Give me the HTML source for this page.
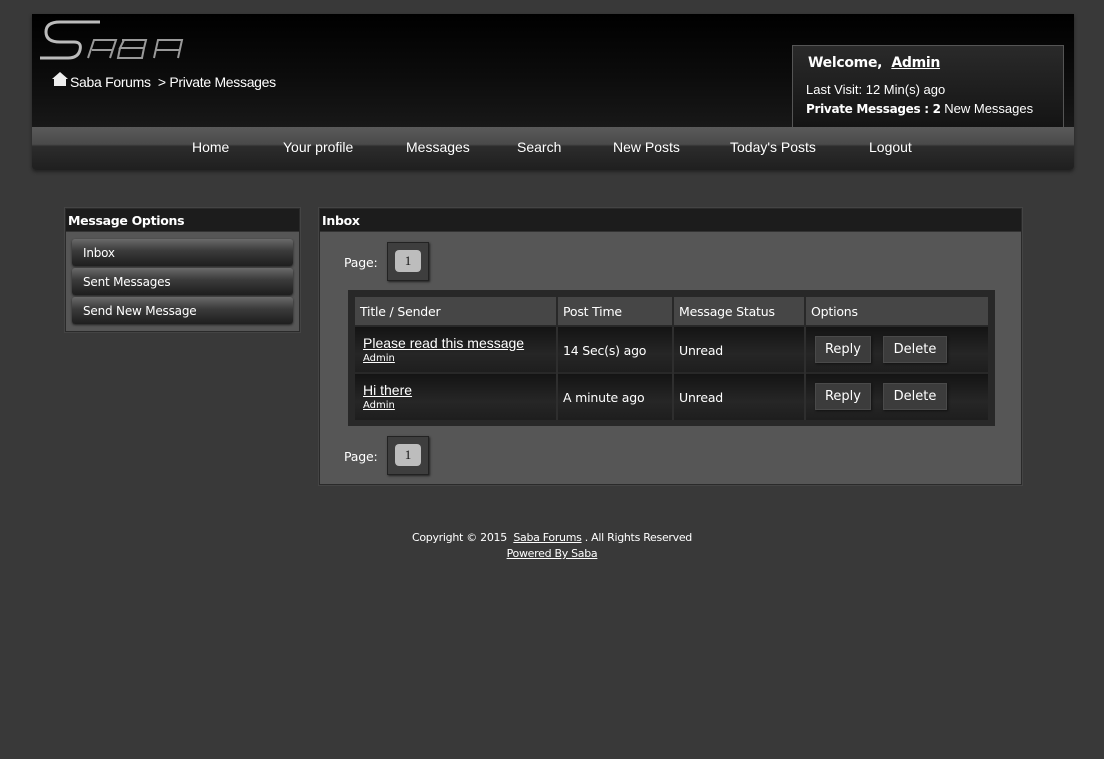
<!DOCTYPE html>
<html><head><meta charset="utf-8"><style>
*{margin:0;padding:0;box-sizing:border-box}
body{width:1104px;height:759px;background:#393939;font-family:"DejaVu Sans","Liberation Sans",sans-serif;color:#fff;position:relative;overflow:hidden}
.a{position:absolute}
.hdr{left:32px;top:14px;width:1042px;height:156px;background:linear-gradient(#000 0%,#0c0c0c 40%,#222 100%);border-radius:0 0 4px 4px;box-shadow:0 2px 3px #222}
.nav{left:32px;top:127px;width:1042px;height:43px;background:linear-gradient(#5a5a5a 0%,#4a4a4a 40%,#2c2c2c 45%,#1f1f1f 100%);border-radius:0 0 5px 5px}
.nav span{position:absolute;top:12px;font-family:"Liberation Sans",sans-serif;font-size:14px;color:#fff}
.wel{left:792px;top:45px;width:272px;height:82px;background:linear-gradient(#2a2a2a,#141414);border:1px solid #555;border-bottom:none}
.t13{font-family:"Liberation Sans",sans-serif;font-size:12.5px}
.box{background:#565656;border:1px solid #2a2a2a;box-shadow:0 0 0 1px #444}
.bh{background:#1c1c1c;font-weight:bold;font-size:12.5px;padding:4px 2px;height:23px;border-bottom:1px solid #333;letter-spacing:-0.3px}
.item{left:72px;width:221px;height:27px;background:linear-gradient(#6a6a6a,#3a3a3a 45%,#1e1e1e);border-radius:3px;font-size:12px;padding:7px 11px;box-shadow:0 1px 2px #222;letter-spacing:-0.2px}
.pg{width:42px;height:39px;background:#3e3e3e;border:1px solid #222;box-shadow:1px 1px 2px #222}
.pg div{position:absolute;left:7px;top:7px;width:26px;height:22px;background:#bdbdbd;border-radius:4px;color:#111;font-family:"Liberation Serif",serif;font-size:13px;text-align:center;line-height:22px}
.th{background:#464646;top:297px;height:28px;font-size:12.5px;padding:7px 5px;letter-spacing:-0.2px}
.td{font-size:13px;background:linear-gradient(#141414,#262626 60%,#1e1e1e)}
.c{font-size:12.5px;letter-spacing:-0.2px}
.btn{width:56px;height:27px;background:#3c3c3c;border:1px solid #4a4a4a;box-shadow:1px 1px 2px #111;font-size:13px;text-align:center;line-height:25px}
u{text-decoration:underline}
</style></head><body>
<div class="a hdr"></div>
<svg class="a" style="left:38px;top:18px" width="150" height="46" viewBox="0 0 150 46"><g fill="none" stroke="#bbb" stroke-width="3"><path d="M62 4 H22 Q8 4 8 14 Q8 24 22 24 H36 Q44 24 42 32 Q40 40 30 40 H2"/></g><g fill="none" stroke="#999" stroke-width="2"><path d="M50 40 L56 22 H78 L72 40 M54 32 H74"/><path d="M84 22 H108 L106 30 H82 L86 22 M82 30 L80 40 H104 L106 30"/><path d="M116 40 L120 22 H144 L140 40 M118 32 H142"/></g></svg>
<svg class="a" style="left:52px;top:72px" width="16" height="14" viewBox="0 0 16 14"><path d="M8 0 L16 7 H14 V14 H2 V7 H0 Z" fill="#eee"/></svg>
<div class="a t13" style="left:70px;top:74px;font-size:14px;letter-spacing:-0.3px">Saba Forums&nbsp; &gt;&nbsp;Private Messages</div>
<div class="a wel">
<div class="a" style="left:15px;top:9px;font-weight:bold;font-size:14px;letter-spacing:-0.3px">Welcome,&nbsp; <u>Admin</u></div>
<div class="a t13" style="left:13px;top:36px;font-size:13px">Last Visit: 12 Min(s) ago</div>
<div class="a t13" style="left:13px;top:55px;font-size:13px;white-space:nowrap"><b style="font-family:'DejaVu Sans';font-size:12px;letter-spacing:-0.3px">Private Messages : 2</b> New Messages</div>
</div>
<div class="a nav">
<span style="left:160px">Home</span><span style="left:251px">Your profile</span><span style="left:374px">Messages</span><span style="left:485px">Search</span><span style="left:581px">New Posts</span><span style="left:698px">Today's Posts</span><span style="left:837px">Logout</span>
</div>

<div class="a box" style="left:65px;top:208px;width:235px;height:124px"><div class="bh">Message Options</div></div>
<div class="a item" style="top:239px">Inbox</div>
<div class="a item" style="top:268px">Sent Messages</div>
<div class="a item" style="top:297px">Send New Message</div>

<div class="a box" style="left:319px;top:208px;width:703px;height:277px"><div class="bh">Inbox</div></div>
<div class="a c" style="left:344px;top:255px">Page:</div>
<div class="a pg" style="left:387px;top:242px"><div>1</div></div>
<div class="a" style="left:348px;top:290px;width:647px;height:136px;background:#282828"></div>
<div class="a th" style="left:355px;width:201px">Title / Sender</div>
<div class="a th" style="left:558px;width:114px">Post Time</div>
<div class="a th" style="left:674px;width:130px">Message Status</div>
<div class="a th" style="left:806px;width:182px">Options</div>
<div class="a td" style="left:355px;top:327px;width:633px;height:45px"></div>
<div class="a td" style="left:355px;top:374px;width:633px;height:46px"></div>
<div class="a" style="left:556px;top:327px;width:2px;height:93px;background:#2e2e2e"></div>
<div class="a" style="left:672px;top:327px;width:2px;height:93px;background:#2e2e2e"></div>
<div class="a" style="left:804px;top:327px;width:2px;height:93px;background:#2e2e2e"></div>
<div class="a" style="left:363px;top:335px;font-family:'Liberation Sans';font-size:14px"><u>Please read this message</u></div>
<div class="a" style="left:363px;top:353px;font-size:10px"><u>Admin</u></div>
<div class="a" style="left:363px;top:382px;font-family:'Liberation Sans';font-size:14px"><u>Hi there</u></div>
<div class="a" style="left:363px;top:400px;font-size:10px"><u>Admin</u></div>
<div class="a c" style="left:563px;top:343px">14 Sec(s) ago</div>
<div class="a c" style="left:563px;top:390px">A minute ago</div>
<div class="a c" style="left:679px;top:343px">Unread</div>
<div class="a c" style="left:679px;top:390px">Unread</div>
<div class="a btn" style="left:815px;top:336px">Reply</div>
<div class="a btn" style="left:883px;top:336px;width:64px">Delete</div>
<div class="a btn" style="left:815px;top:383px">Reply</div>
<div class="a btn" style="left:883px;top:383px;width:64px">Delete</div>
<div class="a c" style="left:344px;top:449px">Page:</div>
<div class="a pg" style="left:387px;top:436px"><div>1</div></div>

<div class="a" style="left:0;width:1104px;top:530px;text-align:center;font-size:11px;line-height:16px;letter-spacing:-0.3px">Copyright © 2015&nbsp; <u>Saba Forums</u> . All Rights Reserved<br><u>Powered By Saba</u></div>
</body></html>
